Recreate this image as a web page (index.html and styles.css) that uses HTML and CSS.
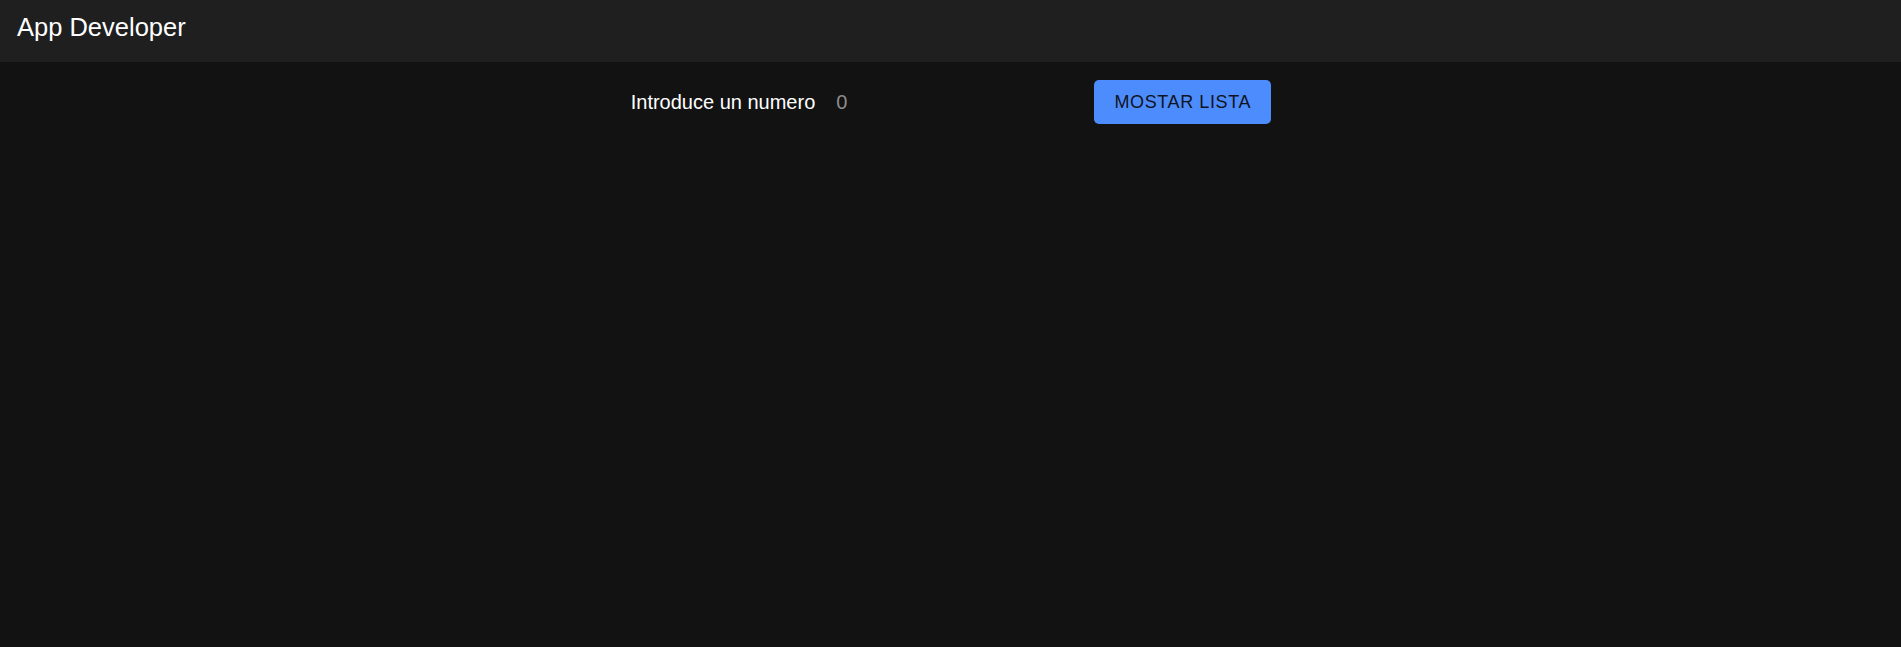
FILE: index.html
```html
<!DOCTYPE html>
<html lang="es">
<head>
<meta charset="utf-8">
<title>App Developer</title>
<link rel="stylesheet" href="styles.css">
</head>
<body>
<header class="appbar">
  <h1 class="title">App Developer</h1>
</header>
<main class="content">
  <div class="form-row">
    <label class="label" for="num">Introduce un numero</label>
    <input class="num-input" id="num" type="text" value="0">
    <button class="btn" type="button">Mostar lista</button>
  </div>
</main>
</body>
</html>
```

FILE: styles.css
```css
html, body {
  margin: 0;
  padding: 0;
  background: #121212;
  height: 100%;
}
body {
  font-family: "Liberation Sans", Arial, sans-serif;
  color: #ffffff;
}
.appbar {
  background: #1f1f1f;
  height: 62px;
  box-sizing: border-box;
  padding: 7px 17px 0;
}
.title {
  margin: 0;
  font-size: 25.5px;
  line-height: 40px;
  font-weight: 400;
  color: #ffffff;
}
.content {
  padding-top: 18px;
}
.form-row {
  display: flex;
  align-items: center;
  justify-content: center;
  padding-left: 1px;
}
.label {
  font-size: 20px;
  line-height: 30px;
  color: #ffffff;
  margin-right: 21px;
}
.num-input {
  width: 258px;
  box-sizing: border-box;
  background: transparent;
  border: none;
  outline: none;
  padding: 0;
  font-family: "Liberation Sans", Arial, sans-serif;
  font-size: 20px;
  line-height: 30px;
  height: 30px;
  color: #8c8c8c;
}
.btn {
  height: 44px;
  width: 177px;
  box-sizing: border-box;
  padding: 0 18px;
  background: #4d8cfd;
  border: none;
  border-radius: 5px;
  font-family: "Liberation Sans", Arial, sans-serif;
  font-size: 18px;
  letter-spacing: 0.6px;
  text-transform: uppercase;
  color: #0f1420;
  cursor: pointer;
  display: flex;
  align-items: center;
  justify-content: center;
}
```
